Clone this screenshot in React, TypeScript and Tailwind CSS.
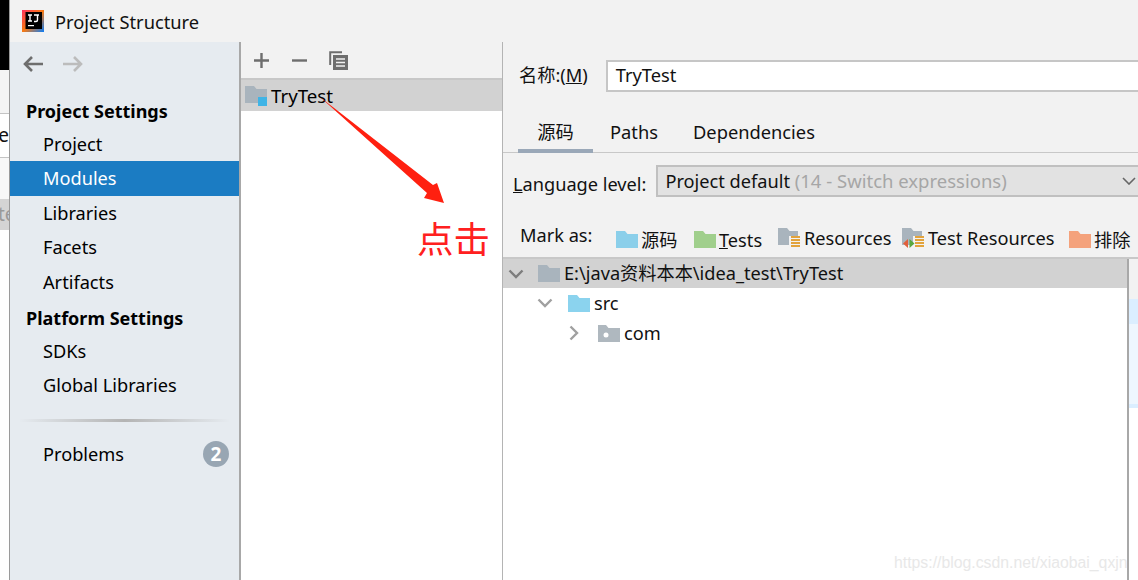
const font = { fontFamily: '"Noto Sans","Noto Sans CJK SC",sans-serif' };

function Folder({ color, className = "" }: { color: string; className?: string }) {
  return (
    <svg width="22" height="17" viewBox="0 0 22 17" className={className}>
      <path d="M0 0h9l2.5 3H22v14H0z" fill={color} />
    </svg>
  );
}

function ResFolder({ test }: { test?: boolean }) {
  return (
    <svg width="23" height="22" viewBox="0 0 23 22" className="shrink-0">
      <path d="M0 1h9l2.5 3H20v14H0z" fill="#a9b4bd" />
      <rect x="11" y="9" width="12" height="13" fill="#f2f2f2" />
      <path d="M13 10h9M13 13h9M13 16h9M13 19h9" stroke="#e2a33c" strokeWidth="2" />
      {test && (
        <>
          <path d="M6 12v9l-5-4.5z" fill="#e0603c" />
          <path d="M7.5 12v9l5-4.5z" fill="#5aa83f" />
        </>
      )}
    </svg>
  );
}

function NavItem({ label, active }: { label: string; active?: boolean }) {
  return (
    <div className={`h-[34.5px] pl-[33px] flex items-center text-[18.2px] leading-none ${active ? "bg-[#1b7cc3] text-white" : "text-black"}`}>
      {label}
    </div>
  );
}

function Arrow({ dir, color }: { dir: "l" | "r"; color: string }) {
  return (
    <svg width="20" height="16" viewBox="0 0 20 16" fill="none" stroke={color} strokeWidth="2.6">
      {dir === "l" ? <path d="M20 8H2M9 1L2 8l7 7" /> : <path d="M0 8h18M11 1l7 7-7 7" />}
    </svg>
  );
}

function MarkItem({ icon, children, width }: { icon: React.ReactNode; children: React.ReactNode; width: string }) {
  return (
    <div className={`flex items-center gap-[3px] shrink-0 ${width}`}>
      {icon}
      <span className="text-[18.2px] leading-none whitespace-nowrap">{children}</span>
    </div>
  );
}

export default function App() {
  return (
    <div className="relative w-[1138px] h-[580px] overflow-hidden flex bg-white text-[#111]" style={font}>
      {/* Window behind */}
      <div className="w-[10px] shrink-0 flex flex-col border-r border-[#9a9a9a] text-[19px] leading-none overflow-hidden">
        <div className="h-[70px] bg-black" />
        <div className="h-[44px] bg-[#f4f4f4] border-b border-[#c4c4c4]" />
        <div className="h-[44px] bg-white border-b border-[#c4c4c4] flex items-center justify-end overflow-hidden">
          <span className="shrink-0">e</span>
        </div>
        <div className="h-[41px] bg-[#f8f8f8]" />
        <div className="h-[31px] bg-[#d4d4d4] text-[#9a9a9a] flex items-center overflow-hidden">
          <span className="-ml-[2px] shrink-0">te</span>
        </div>
        <div className="flex-1 bg-white" />
      </div>

      <div className="flex-1 min-w-0 flex flex-col bg-[#f2f2f2]">
        {/* Title bar */}
        <div className="h-[42px] shrink-0 flex items-center pl-[12px] gap-[12px] text-[18.3px] leading-none">
          <svg width="22" height="22" viewBox="0 0 22 22">
            <defs>
              <linearGradient id="ij" x1="0" y1="0" x2="1" y2="1">
                <stop offset="0" stopColor="#fe315d" />
                <stop offset="0.5" stopColor="#f97a12" />
                <stop offset="1" stopColor="#087cfa" />
              </linearGradient>
            </defs>
            <rect width="22" height="22" fill="url(#ij)" />
            <rect x="3.5" y="2" width="16.5" height="17" fill="#000" />
            <path d="M6 5h4M8 5v6M6 11h4M12 5h5M15.5 5v5q0 1.5-1.5 1.5h-2" stroke="#fff" strokeWidth="1.4" fill="none" />
            <rect x="6" y="15" width="6" height="1.2" fill="#fff" />
          </svg>
          <span className="pt-[2px] -ml-[1px]">Project Structure</span>
        </div>

        <div className="flex-1 min-h-0 flex">
          {/* Sidebar */}
          <div className="w-[231px] shrink-0 bg-[#e6ebf0] border-r-2 border-[#a8a8a8] flex flex-col">
            <div className="h-[51.5px] flex items-start pl-[13px] gap-[20px] pt-[14px]">
              <Arrow dir="l" color="#6e6e6e" />
              <Arrow dir="r" color="#bcbcbc" />
            </div>
            <div className="h-[33px] pl-[16px] flex items-center font-bold text-[18px] leading-none text-black pt-[2px]">Project Settings</div>
            <NavItem label="Project" />
            <NavItem label="Modules" active />
            <NavItem label="Libraries" />
            <NavItem label="Facets" />
            <NavItem label="Artifacts" />
            <div className="h-[35px] pl-[16px] flex items-center font-bold text-[18px] leading-none text-black pt-[3px]">Platform Settings</div>
            <NavItem label="SDKs" />
            <div className="h-[33.5px] pl-[33px] flex items-center text-[18.2px] leading-none text-black">Global Libraries</div>
            <div className="mx-[9px] mt-[17px] h-[3px] bg-gradient-to-r from-transparent via-[#b4b4b4] to-transparent" />
            <div className="mt-[15px] h-[34px] pl-[33px] pr-[10px] flex items-center justify-between text-[18.2px] leading-none text-black">
              <span>Problems</span>
              <span className="w-[26px] h-[26px] rounded-full bg-[#98a6b3] text-white font-bold text-[19px] flex items-center justify-center">2</span>
            </div>
          </div>

          {/* Middle */}
          <div className="w-[262px] shrink-0 bg-white border-r border-[#b4b4b4] flex flex-col">
            <div className="h-[38px] bg-[#f2f2f2] border-b-2 border-[#c8c8c8] flex items-center pl-[12px] gap-[21px] shrink-0">
              <svg width="17" height="17" viewBox="0 0 17 17" stroke="#6e6e6e" strokeWidth="2.4"><path d="M8.5 1v15M1 8.5h15" /></svg>
              <svg width="17" height="17" viewBox="0 0 17 17" stroke="#6e6e6e" strokeWidth="2.4"><path d="M1 8.5h15" /></svg>
              <svg width="19" height="19" viewBox="0 0 19 19" fill="none">
                <path d="M1.2 14V1.2H13" stroke="#6e6e6e" strokeWidth="2" />
                <rect x="4" y="4" width="15" height="15" fill="#6e6e6e" />
                <path d="M7 8h9M7 11.5h9M7 15h9" stroke="#f2f2f2" strokeWidth="1.6" />
              </svg>
            </div>
            <div className="h-[31px] bg-[#d2d2d2] flex items-center pl-[4px] gap-[4px] text-[18.7px] leading-none text-black shrink-0">
              <div className="relative w-[22px] h-[20px] shrink-0">
                <Folder color="#a9b4bd" />
                <span className="absolute right-0 bottom-0 w-[9px] h-[9px] bg-[#3fb4e6]" />
              </div>
              <span className="pt-[2px]">TryTest</span>
            </div>
          </div>

          {/* Right */}
          <div className="flex-1 min-w-0 flex flex-col">
            <div className="h-[50px] shrink-0 flex items-end pl-[16px] gap-[18px]">
              <span className="text-[18.2px] leading-[30px] pb-[2px] whitespace-nowrap">名称:(<u>M</u>)</span>
              <div className="flex-1 h-[32px] bg-white border-2 border-[#c6c6c6] border-r-0 flex items-center pl-[8px] pb-[1px] text-[18.3px] leading-none">TryTest</div>
            </div>
            <div className="h-[41px] mt-[20px] shrink-0 border-b border-[#c8c8c8] flex items-stretch pl-[15px] text-[18.3px] leading-none">
              <div className="w-[75px] flex items-center justify-center border-b-[4px] border-[#9aa8b8] -mb-px pt-[3px]">源码</div>
              <div className="flex items-center pl-[17px]">Paths</div>
              <div className="flex items-center pl-[35px]">Dependencies</div>
            </div>
            <div className="h-[32px] mt-[12px] shrink-0 flex items-center pl-[10px] gap-[10px] text-[18.2px] leading-none">
              <span className="whitespace-nowrap pt-[6px]"><u>L</u>anguage level:</span>
              <div className="flex-1 min-w-0 h-[32px] bg-[#e2e2e2] border-2 border-r-0 border-[#c0c0c0] flex items-center pl-[8px] pr-[2px] justify-between whitespace-nowrap overflow-hidden">
                <span className="pt-[1px] -ml-[1px]">Project default <span className="text-[#a6a6a6] text-[18.5px]">(14 - Switch expressions)</span></span>
                <svg width="14" height="8" viewBox="0 0 14 8" fill="none" stroke="#666" strokeWidth="1.6" className="shrink-0"><path d="M1 1l6 6 6-6" /></svg>
              </div>
            </div>
            <div className="h-[62px] shrink-0 border-b-2 border-[#c8c8c8] flex items-end pb-[8px] pl-[17px] text-[18.2px] leading-none whitespace-nowrap overflow-hidden">
              <span className="w-[96px] shrink-0 pb-[5px]">Mark as:</span>
              <MarkItem width="w-[78px]" icon={<Folder color="#8bcfea" className="shrink-0" />}><span>源码</span></MarkItem>
              <MarkItem width="w-[84px]" icon={<Folder color="#a0cf8c" className="shrink-0" />}><span><u>T</u>ests</span></MarkItem>
              <MarkItem width="w-[124px]" icon={<ResFolder />}><span>Resources</span></MarkItem>
              <MarkItem width="w-[167px]" icon={<ResFolder test />}><span>Test Resources</span></MarkItem>
              <MarkItem width="w-[70px]" icon={<Folder color="#f4a27c" className="shrink-0" />}><span>排除</span></MarkItem>
            </div>
            <div className="flex-1 min-h-0 flex">
              <div className="w-[624px] shrink-0 bg-white flex flex-col text-[18.2px] leading-none">
                <div className="h-[29px] bg-[#d2d2d2] flex items-center pl-[5px]">
                  <svg width="16" height="10" viewBox="0 0 16 10" fill="none" stroke="#7d7d7d" strokeWidth="2.4"><path d="M1.5 1.5L8 8l6.5-6.5" /></svg>
                  <Folder color="#a9b4bd" className="ml-[14px] mr-[4px] shrink-0" />
                  <span className="whitespace-nowrap">E:\java资料本本\idea_test\TryTest</span>
                </div>
                <div className="h-[30px] flex items-center pl-[34px]">
                  <svg width="16" height="10" viewBox="0 0 16 10" fill="none" stroke="#a0a0a0" strokeWidth="2.4"><path d="M1.5 1.5L8 8l6.5-6.5" /></svg>
                  <Folder color="#8bd3ee" className="ml-[15px] mr-[4px] shrink-0" />
                  <span>src</span>
                </div>
                <div className="h-[30px] flex items-center pl-[66px]">
                  <svg width="10" height="16" viewBox="0 0 10 16" fill="none" stroke="#a0a0a0" strokeWidth="2.4"><path d="M1.5 1.5L8 8l-6.5 6.5" /></svg>
                  <svg width="22" height="17" viewBox="0 0 22 17" className="ml-[19px] mr-[4px] shrink-0">
                    <path d="M0 0h8l2.5 3H22v14H0z" fill="#afb8bf" />
                    <circle cx="8" cy="10" r="2.5" fill="#fff" />
                  </svg>
                  <span>com</span>
                </div>
              </div>
              <div className="flex-1 min-w-0 border-l-2 border-[#a8a8a8] flex flex-col">
                <div className="h-[40px] bg-[#f2f2f2]" />
                <div className="h-[25px] bg-[#dbeeff]" />
                <div className="h-[80px] bg-[#eef6fe]" />
                <div className="h-[4px] bg-[#dbeeff]" />
                <div className="flex-1 bg-white" />
              </div>
            </div>
          </div>
        </div>
      </div>

      {/* Annotations over the screenshot */}
      <svg width="140" height="120" viewBox="0 0 140 120" className="absolute left-[320px] top-[96px]">
        <path d="M0 1L113 89l4-2 7 20-20-5 3-5z" fill="#ff2010" />
      </svg>
      <span className="absolute left-[417px] top-[215px] text-[36.5px] leading-[46px] text-[#ff2020]" style={{ fontFamily: '"Noto Sans CJK SC",sans-serif' }}>点击</span>
      <span className="absolute left-[894px] top-[552px] w-[234px] overflow-hidden text-[15.8px] leading-[22px] text-[#e8e8e8] whitespace-nowrap" style={{ fontFamily: '"Liberation Sans",sans-serif' }}>https://blog.csdn.net/xiaobai_qxjn</span>
    </div>
  );
}
